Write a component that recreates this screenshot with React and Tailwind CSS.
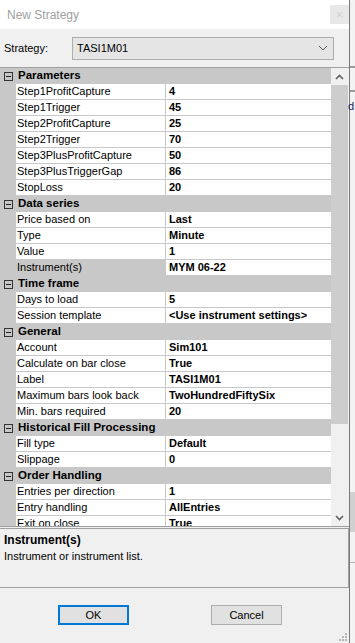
import React from 'react';

const groups = [
    {
        name: 'Parameters',
        items: [
            ['Step1ProfitCapture', '4'],
            ['Step1Trigger', '45'],
            ['Step2ProfitCapture', '25'],
            ['Step2Trigger', '70'],
            ['Step3PlusProfitCapture', '50'],
            ['Step3PlusTriggerGap', '86'],
            ['StopLoss', '20'],
        ],
    },
    {
        name: 'Data series',
        items: [
            ['Price based on', 'Last'],
            ['Type', 'Minute'],
            ['Value', '1'],
            ['Instrument(s)', 'MYM 06-22', true],
        ],
    },
    {
        name: 'Time frame',
        items: [
            ['Days to load', '5'],
            ['Session template', '<Use instrument settings>'],
        ],
    },
    {
        name: 'General',
        items: [
            ['Account', 'Sim101'],
            ['Calculate on bar close', 'True'],
            ['Label', 'TASI1M01'],
            ['Maximum bars look back', 'TwoHundredFiftySix'],
            ['Min. bars required', '20'],
        ],
    },
    {
        name: 'Historical Fill Processing',
        items: [
            ['Fill type', 'Default'],
            ['Slippage', '0'],
        ],
    },
    {
        name: 'Order Handling',
        items: [
            ['Entries per direction', '1'],
            ['Entry handling', 'AllEntries'],
            ['Exit on close', 'True'],
        ],
    },
];

const Chevron = ({ up }) => (
    <svg width="9" height="6" viewBox="0 0 9 6">
        <polyline
            points={up ? '1,5 4.5,1.5 8,5' : '1,1 4.5,4.5 8,1'}
            fill="none"
            stroke="#606060"
            strokeWidth="1.6"
        />
    </svg>
);

const MinusBox = () => (
    <div className="w-[9px] h-[9px] border border-[#333] bg-[#c8c8c8] flex items-center justify-center">
        <div className="w-[5px] h-[1px] bg-[#222]" />
    </div>
);

export default function App() {
    return (
        <div
            className="flex w-[355px] h-[643px] bg-[#f0f0f0] text-[11px] text-black overflow-hidden"
            style={{ fontFamily: '"Liberation Sans", Arial, sans-serif' }}
        >
            {/* Dialog */}
            <div className="w-[350px] h-full flex flex-col bg-[#f0f0f0] border-r border-[#7a7a7a]">
                {/* Title bar */}
                <div className="h-[29px] bg-white flex items-center justify-between pl-[7px]">
                    <span className="text-[12px] text-[#a0a0a0]">New Strategy</span>
                    <div className="w-[19px] h-[19px] bg-[#e8e8e8] flex items-center justify-center text-[#d0d0d0] text-[12px] leading-none">
                        ×
                    </div>
                </div>

                {/* Strategy selector */}
                <div className="h-[38px] flex items-center pl-[4px]">
                    <span className="w-[68px]">Strategy:</span>
                    <div className="w-[262px] h-[23px] border border-[#adadad] bg-[#e5e5e5] flex items-center justify-between pl-[4px] pr-[5px]">
                        <span>TASI1M01</span>
                        <svg width="10" height="6" viewBox="0 0 10 6">
                            <polyline points="1,1 5,5 9,1" fill="none" stroke="#555" strokeWidth="1" />
                        </svg>
                    </div>
                </div>

                {/* Property grid */}
                <div className="h-[460px] flex border-t border-b border-[#a0a0a0]">
                    <div className="w-[331px] overflow-hidden">
                        {groups.map((g) => (
                            <div key={g.name}>
                                <div className="h-[16px] bg-[#c8c8c8] flex items-center">
                                    <div className="w-[16px] flex justify-center">
                                        <MinusBox />
                                    </div>
                                    <span className="font-bold pl-[2px] text-[11.5px]">{g.name}</span>
                                </div>
                                {g.items.map(([name, value, selected]) => (
                                    <div key={name} className="h-[16px] flex">
                                        <div className="w-[16px] bg-[#c8c8c8]" />
                                        <div
                                            className={`w-[149px] pl-[1px] border-b border-[#c8c8c8] leading-[15px] whitespace-nowrap overflow-hidden ${selected ? 'bg-[#c8c8c8]' : 'bg-white'}`}
                                        >
                                            {name}
                                        </div>
                                        <div className="w-[1px] bg-[#c8c8c8]" />
                                        <div className="flex-1 pl-[3px] bg-white border-b border-[#c8c8c8] font-bold leading-[15px] whitespace-nowrap">
                                            {value}
                                        </div>
                                    </div>
                                ))}
                            </div>
                        ))}
                    </div>

                    {/* Scrollbar */}
                    <div className="w-[17px] flex flex-col bg-[#f0f0f0]">
                        <div className="h-[17px] flex items-center justify-center">
                            <Chevron up />
                        </div>
                        <div className="h-[339px] bg-[#cdcdcd]" />
                        <div className="flex-1" />
                        <div className="h-[17px] flex items-center justify-center">
                            <Chevron />
                        </div>
                    </div>
                </div>

                {/* Description */}
                <div className="mt-[1px] h-[60px] border-t border-b border-r border-[#a0a0a0] px-[4px] pt-[4px]">
                    <div className="font-bold text-[12px] leading-[15px]">Instrument(s)</div>
                    <div className="leading-[16px]">Instrument or instrument list.</div>
                </div>

                {/* Buttons */}
                <div className="flex-1 flex flex-col">
                    <div className="flex pl-[58px] pt-[17px] gap-[82px]">
                        <div className="w-[71px] h-[20px] border-2 border-[#0078d7] bg-[#e1e1e1] flex items-center justify-center">
                            OK
                        </div>
                        <div className="w-[71px] h-[20px] border border-[#adadad] bg-[#e1e1e1] flex items-center justify-center">
                            Cancel
                        </div>
                    </div>
                    <div className="flex-1 flex justify-end items-end pr-[2px] pb-[2px]">
                        <svg width="9" height="9" viewBox="0 0 9 9">
                            {[[7, 1], [4, 4], [7, 4], [1, 7], [4, 7], [7, 7]].map(([x, y]) => (
                                <rect key={`${x}-${y}`} x={x} y={y} width="2" height="2" fill="#b5b5b5" />
                            ))}
                        </svg>
                    </div>
                </div>
            </div>

            {/* Window behind */}
            <div className="flex-1 flex flex-col bg-[#f3f3f3]">
                <div className="h-[66px]" />
                <div className="h-[2px] bg-[#9a9a9a]" />
                <div className="h-[22px]" />
                <div className="h-[2px] bg-[#9a9a9a]" />
                <div className="h-[8px]" />
                <div className="text-[11px] leading-[12px] text-[#1a1a6a] -ml-[2px]">d</div>
                <div className="h-[380px]" />
                <div className="h-[40px] bg-[#d0d0d0]" />
                <div className="h-[30px]" />
                <div className="h-[1px] bg-[#b0b0b0]" />
            </div>
        </div>
    );
}
